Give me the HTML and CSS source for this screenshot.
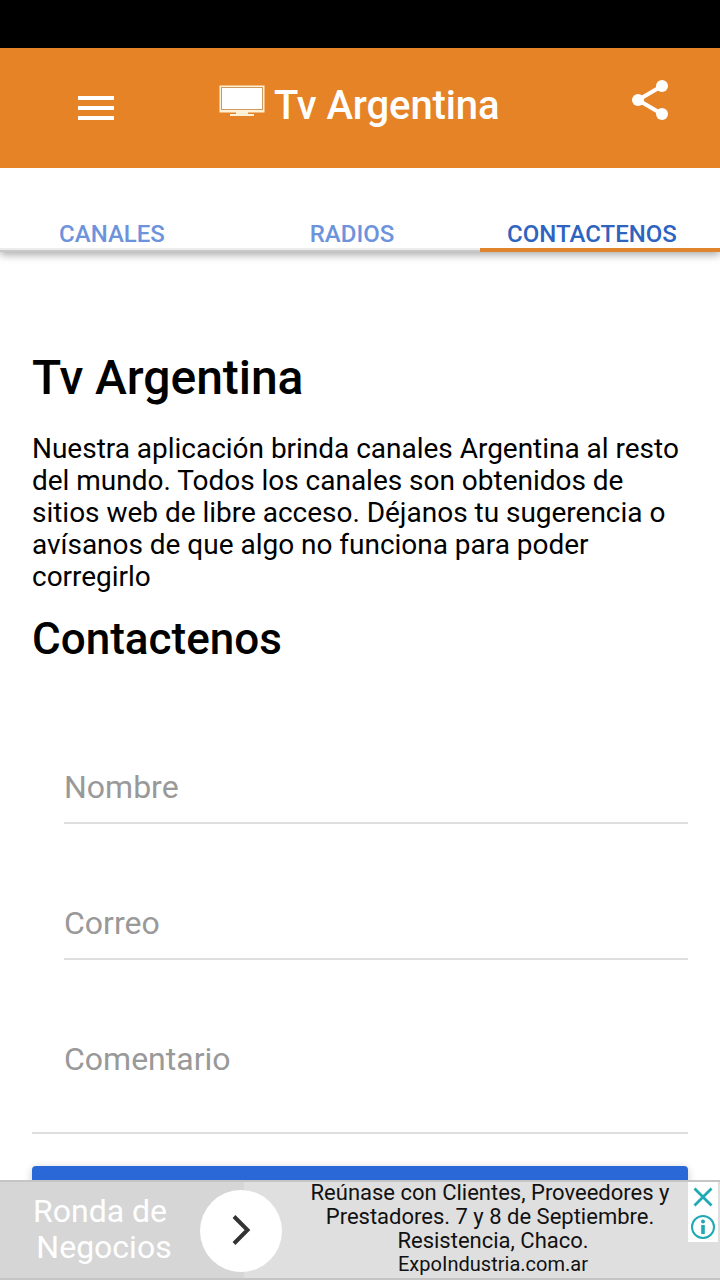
FILE: index.html
```html
<!DOCTYPE html>
<html lang="es">
<head>
  <meta charset="utf-8">
  <title>Tv Argentina</title>
  <meta name="viewport" content="width=device-width, initial-scale=1">
  <link rel="stylesheet" href="styles.css">
</head>
<body>
  <div class="statusbar"></div>
  <header class="toolbar">
    <button class="menu-btn" aria-label="Menu">
      <svg width="36" height="24" viewBox="0 0 36 24" fill="#fff">
        <path d="M0 0h36v4H0zM0 10h36v4H0zM0 20h36v4H0z"/>
      </svg>
    </button>
    <div class="title">
      <svg width="46" height="32" viewBox="0 0 46 32">
        <rect x="0.5" y="0.500" width="45" height="27" fill="#fff1d6"/>
        <rect x="2.500" y="2.500" width="41" height="22" fill="#fff" stroke="#cf9a5c"/>
        <path d="M17 27h12v2h6v2H11v-2h6z" fill="#fff1d6"/>
      </svg>
      <span>Tv Argentina</span>
    </div>
    <button class="share-btn" aria-label="Compartir">
      <svg width="36" height="40" viewBox="0 0 36 40">
        <path d="M30 6L6 20l24 14" fill="none" stroke="#fff" stroke-width="4"/>
        <circle cx="30" cy="6" r="6" fill="#fff"/>
        <circle cx="6" cy="20" r="6" fill="#fff"/>
        <circle cx="30" cy="34" r="6" fill="#fff"/>
      </svg>
    </button>
  </header>
  <nav class="tabs">
    <a class="tab">CANALES</a>
    <a class="tab">RADIOS</a>
    <a class="tab active">CONTACTENOS</a>
  </nav>
  <main class="content">
    <h1>Tv Argentina</h1>
    <p>Nuestra aplicación brinda canales Argentina al resto<br>
      del mundo. Todos los canales son obtenidos de<br>
      sitios web de libre acceso. Déjanos tu sugerencia o<br>
      avísanos de que algo no funciona para poder<br>
      corregirlo</p>
    <h2>Contactenos</h2>
    <form>
      <div class="item"><label>Nombre</label></div>
      <div class="item"><label>Correo</label></div>
      <div class="item last"><label>Comentario</label></div>
      <div class="send-btn"></div>
    </form>
  </main>
  <aside class="ad">
    <div class="ad-name">Ronda de&nbsp;<br>Negocios</div>
    <div class="ad-arrow">
      <svg width="20" height="32" viewBox="0 0 20 32">
        <path d="M3 2.500L16.500 16 3 29.500" fill="none" stroke="#333" stroke-width="4"/>
      </svg>
    </div>
    <div class="ad-text">
      <div>Reúnase con Clientes, Proveedores y</div>
      <div>Prestadores. 7 y 8 de Septiembre.</div>
      <div class="indent">Resistencia, Chaco.</div>
      <div class="indent url">ExpoIndustria.com.ar</div>
    </div>
    <div class="ad-choices">
      <svg width="30" height="60" viewBox="0 0 30 60" fill="none" stroke="#1fa9b4">
        <path d="M6.500 6.500l17 17M23.500 6.500l-17 17" stroke-width="2.800"/>
        <circle cx="15" cy="45" r="11" stroke-width="2"/>
        <path d="M15 43v9" stroke-width="3.600"/>
        <circle cx="15" cy="39.500" r="2" fill="#1fa9b4" stroke="none"/>
      </svg>
    </div>
  </aside>
</body>
</html>
```
FILE: styles.css
```css
* {
  box-sizing: border-box;
}
html {
  font-family: Roboto, sans-serif;
}
body {
  margin: 0;
  height: 1280px;
  display: flex;
  flex-direction: column;
  overflow: hidden;
  background: #fff;
}
svg {
  display: block;
}
button {
  padding: 0;
  border: 0;
  background: none;
}
.statusbar {
  flex: none;
  height: 48px;
  background: #000;
}
.toolbar {
  position: relative;
  z-index: 1;
  flex: none;
  display: flex;
  height: 120px;
  padding: 0 52px 0 78px;
  background: #e58326;
}
.menu-btn {
  align-self: flex-start;
  margin-top: 48px;
}
.share-btn {
  align-self: flex-start;
  margin: 32px 0 0 auto;
}
.title {
  display: flex;
  gap: 9px;
  margin-left: 105px;
  padding-top: 33px;
  color: #fff;
  font-size: 40px;
  font-weight: 500;
  line-height: 48px;
  white-space: nowrap;
}
.title svg {
  margin-top: 4px;
}
.title span {
  padding-top: 1px;
  letter-spacing: -.1px;
}
.tabs {
  flex: none;
  display: flex;
  height: 84px;
  box-shadow: 0 3px 8px rgba(0,0,0,.33);
}
.tab {
  flex: 1;
  padding: 50px 16px 0 0;
  border-bottom: 2px solid #c8c8c8;
  box-shadow: inset 0 -2px #ececec;
  color: #6d93dc;
  font-size: 24px;
  font-weight: 500;
  line-height: 32px;
  text-align: center;
}
.tab.active {
  color: #2f63c0;
  border-bottom: 4px solid #e0852e;
  box-shadow: none;
}
.content {
  flex: 1;
  min-height: 0;
  padding: 96px 32px 0;
  overflow: hidden;
}
h1, h2, p {
  margin: 0;
  color: #000;
}
h1 {
  font-size: 48px;
  font-weight: 500;
  line-height: 60px;
  letter-spacing: -.05px;
}
p {
  margin-top: 25px;
  font-size: 28px;
  line-height: 32px;
  letter-spacing: -.02px;
  white-space: nowrap;
}
h2 {
  margin-top: 18px;
  font-size: 44px;
  font-weight: 500;
  line-height: 56px;
}
form {
  padding-top: 21px;
}
.item {
  height: 136px;
  margin-left: 32px;
  padding-top: 79px;
  border-bottom: 2px solid #dedede;
  color: #999;
  font-size: 32px;
  line-height: 40px;
}
.item.last {
  height: 174px;
  margin-left: 0;
  padding-left: 32px;
}
.send-btn {
  height: 72px;
  margin-top: 32px;
  border-radius: 4px;
  background: #2a68d8;
  box-shadow: 0 2px 8px rgba(0,0,0,.2);
}
.ad {
  position: relative;
  flex: none;
  display: flex;
  height: 100px;
  border-top: 2px solid #c5c5c5;
  border-bottom: 2px solid #c5c5c5;
  background: linear-gradient(90deg, #d6d6d6 244px, #dfdfdf 244px);
}
.ad-name {
  width: 200px;
  padding: 11px 0 0 8px;
  color: #fff;
  font-size: 32px;
  line-height: 36px;
  text-align: center;
}
.ad-arrow {
  display: flex;
  align-items: center;
  justify-content: center;
  width: 82px;
  height: 82px;
  margin-top: 8px;
  padding-bottom: 2px;
  border-radius: 50%;
  background: #fff;
}
.ad-text {
  width: 406px;
  margin: -1px 0 0 5px;
  color: #111;
  font-size: 22px;
  line-height: 24px;
  text-align: center;
  white-space: nowrap;
}
.ad-text .indent {
  padding-left: 6px;
}
.ad-text .url {
  font-size: 20px;
  line-height: 22px;
  letter-spacing: .02px;
}
.ad-choices {
  position: absolute;
  top: 0;
  right: 2px;
  background: #fff;
}
```
